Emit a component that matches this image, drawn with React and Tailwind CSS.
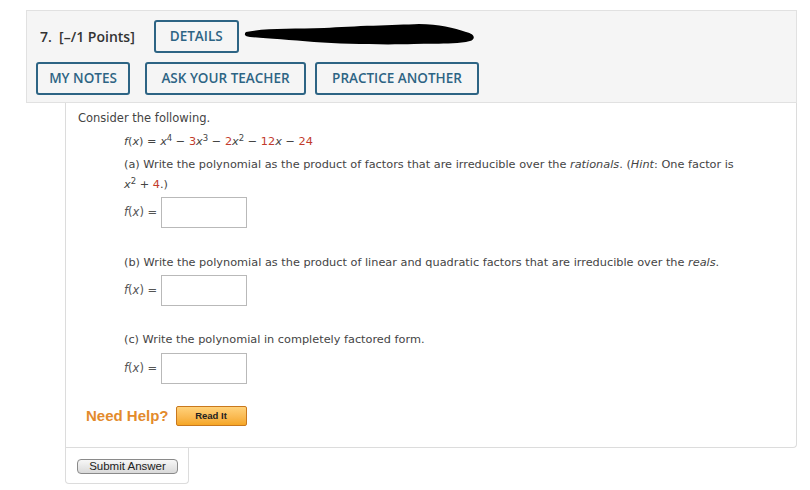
import React from 'react';

const sans = { fontFamily: '"Open Sans", "Liberation Sans", sans-serif' };

const OutlineBtn = ({ children, className = '' }) => (
  <div className={`h-[33px] flex items-center justify-center whitespace-nowrap border-2 border-[#2d6484] rounded-[3px] text-[#2d6484] text-[13.5px] font-semibold ${className}`}>
    {children}
  </div>
);

const Red = ({ children }) => <span className="text-[#c23a2b]">{children}</span>;

const AnswerRow = () => (
  <div className="flex items-center ml-[46px] h-[31px]">
    <span className="text-[#555] text-[11.5px]"><i>f</i>(<i>x</i>) =</span>
    <div className="ml-[4px] w-[86px] h-[31px] border border-[#b9b9b9] bg-white" />
  </div>
);

export default function App() {
  return (
    <div className="w-[810px] h-[490px] bg-white overflow-hidden pt-[10px]" style={{ fontFamily: '"DejaVu Sans", Verdana, sans-serif' }}>
      {/* header */}
      <div className="ml-[26px] w-[771px] h-[93px] bg-[#f5f5f5] border border-[#e1e1e1]" style={sans}>
        <div className="flex items-center pt-[8px] h-[42px]">
          <span className="ml-[13px] text-[14px] font-semibold text-[#333] whitespace-nowrap">7.&nbsp; [–/1 Points]</span>
          <OutlineBtn className="ml-[19px] w-[85px]">DETAILS</OutlineBtn>
          <svg className="ml-[5px] -mt-[2px]" width="232" height="24" viewBox="0 0 232 24">
            <path d="M2 9 C20 5 50 6 80 5 C110 3 150 2 175 1 C195 1 210 5 222 9 C231 11 232 16 226 18 C210 22 190 20 170 21 C140 22 100 21 70 19 C45 17 20 15 6 14 C0 13 0 11 2 9 Z" fill="#000" />
          </svg>
        </div>
        <div className="flex items-center mt-[9px] ml-[9px]">
          <OutlineBtn className="w-[94px]">MY NOTES</OutlineBtn>
          <OutlineBtn className="ml-[15px] w-[161px]">ASK YOUR TEACHER</OutlineBtn>
          <OutlineBtn className="ml-[9px] w-[164px]">PRACTICE ANOTHER</OutlineBtn>
        </div>
      </div>

      {/* question body */}
      <div className="ml-[65px] w-[732px] h-[345px] border-l border-r border-b border-[#dcdcdc] rounded-br-[4px] pl-[12px] pt-[7px] text-[11.3px] text-[#444]">
        <div className="h-[16px] leading-[16px] text-[11.5px]">Consider the following.</div>
        <div className="ml-[46px] mt-[8px] leading-[16px]">
          <i>f</i>(<i>x</i>) = <i>x</i><sup className="text-[8.5px]">4</sup> − <Red>3</Red><i>x</i><sup className="text-[8.5px]">3</sup> − <Red>2</Red><i>x</i><sup className="text-[8.5px]">2</sup> − <Red>12</Red><i>x</i> − <Red>24</Red>
        </div>
        <div className="ml-[46px] mt-[5px] leading-[20px] w-[622px]">
          (a) Write the polynomial as the product of factors that are irreducible over the <i>rationals</i>. (<i>Hint</i>: One factor is <i>x</i><sup className="text-[8.5px]">2</sup> + <Red>4</Red>.)
        </div>
        <div className="mt-[2px]"><AnswerRow /></div>
        <div className="ml-[46px] mt-[27px] leading-[16px] whitespace-nowrap">
          (b) Write the polynomial as the product of linear and quadratic factors that are irreducible over the <i>reals</i>.
        </div>
        <div className="mt-[4px]"><AnswerRow /></div>
        <div className="ml-[46px] mt-[26px] leading-[16px]">
          (c) Write the polynomial in completely factored form.
        </div>
        <div className="mt-[5px]"><AnswerRow /></div>
        <div className="flex items-center ml-[8px] mt-[21px]" style={{ fontFamily: '"Liberation Sans", Arial, sans-serif' }}>
          <span className="text-[15px] font-bold text-[#e38b2c]">Need Help?</span>
          <div className="ml-[7px] w-[71px] h-[20px] flex items-center justify-center border border-[#c9781d] rounded-[2px] bg-gradient-to-b from-[#ffd27a] to-[#f5a623] text-[9.5px] font-bold text-[#222]">
            Read It
          </div>
        </div>
      </div>

      {/* submit */}
      <div className="ml-[65px] w-[124px] h-[36px] border-l border-r border-b border-[#dcdcdc] rounded-b-[4px] pl-[11px] pt-[11px]" style={{ fontFamily: '"Liberation Sans", Arial, sans-serif' }}>
        <div className="w-[101px] h-[15px] flex items-center justify-center border border-[#8a8a8a] rounded-[4px] bg-gradient-to-b from-[#f7f7f7] to-[#d9d9d9] text-[11.5px] text-[#222]">
          Submit Answer
        </div>
      </div>
    </div>
  );
}
